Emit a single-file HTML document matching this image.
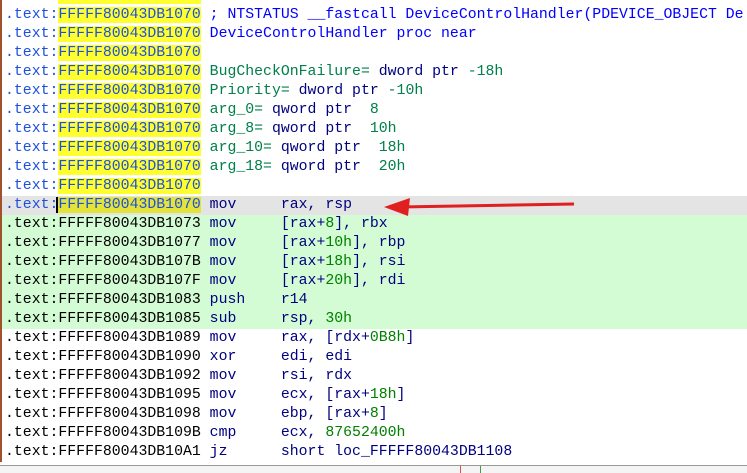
<!DOCTYPE html><html><head><style>
body{margin:0;width:747px;height:472px;overflow:hidden;background:#fff;position:relative}
#c{position:absolute;left:0;top:-13px;width:747px;border-left:2px solid #a0522d;font:14.83px/19px "Liberation Mono",monospace}
.l{height:19px;padding-left:3px;white-space:pre;overflow:hidden}
.p{color:#1e50e0}.b{color:#000}
.y{background:#ffff30}.yd{background:#e3e33a}
.g{background:#d4fcd4}.h{background:#e4e4e4}
.m{color:#000080}.n{color:#00804a}.k{color:#008000}.c{color:#0000ff}
#bot{position:absolute;left:0;top:465px;width:747px;height:7px;background:#f4f4f4;border-top:1px solid #999}
</style></head><body>
<div id="c"><div class="l"><span class="p">.text:</span><span class="p y">FFFFF80043DB1070</span></div><div class="l"><span class="p">.text:</span><span class="p y">FFFFF80043DB1070</span> <span class="c">; NTSTATUS __fastcall DeviceControlHandler(PDEVICE_OBJECT De</span></div><div class="l"><span class="p">.text:</span><span class="p y">FFFFF80043DB1070</span> <span class="c">DeviceControlHandler proc near</span></div><div class="l"><span class="p">.text:</span><span class="p y">FFFFF80043DB1070</span></div><div class="l"><span class="p">.text:</span><span class="p y">FFFFF80043DB1070</span> <span class="n">BugCheckOnFailure=</span><span class="m"> dword ptr </span><span class="n">-18h</span></div><div class="l"><span class="p">.text:</span><span class="p y">FFFFF80043DB1070</span> <span class="n">Priority=</span><span class="m"> dword ptr </span><span class="n">-10h</span></div><div class="l"><span class="p">.text:</span><span class="p y">FFFFF80043DB1070</span> <span class="n">arg_0=</span><span class="m"> qword ptr  </span><span class="n">8</span></div><div class="l"><span class="p">.text:</span><span class="p y">FFFFF80043DB1070</span> <span class="n">arg_8=</span><span class="m"> qword ptr  </span><span class="n">10h</span></div><div class="l"><span class="p">.text:</span><span class="p y">FFFFF80043DB1070</span> <span class="n">arg_10=</span><span class="m"> qword ptr  </span><span class="n">18h</span></div><div class="l"><span class="p">.text:</span><span class="p y">FFFFF80043DB1070</span> <span class="n">arg_18=</span><span class="m"> qword ptr  </span><span class="n">20h</span></div><div class="l"><span class="p">.text:</span><span class="p y">FFFFF80043DB1070</span></div><div class="l h"><span class="p">.text:</span><span class="p yd" style="border-left:2px solid #000;margin-left:-2px">FFFFF80043DB1070</span> <span class="m">mov     rax, rsp</span></div><div class="l g"><span class="b">.text:FFFFF80043DB1073</span> <span class="m">mov     [rax+<span class="k">8</span>], rbx</span></div><div class="l g"><span class="b">.text:FFFFF80043DB1077</span> <span class="m">mov     [rax+<span class="k">10h</span>], rbp</span></div><div class="l g"><span class="b">.text:FFFFF80043DB107B</span> <span class="m">mov     [rax+<span class="k">18h</span>], rsi</span></div><div class="l g"><span class="b">.text:FFFFF80043DB107F</span> <span class="m">mov     [rax+<span class="k">20h</span>], rdi</span></div><div class="l g"><span class="b">.text:FFFFF80043DB1083</span> <span class="m">push    r14</span></div><div class="l g"><span class="b">.text:FFFFF80043DB1085</span> <span class="m">sub     rsp, <span class="k">30h</span></span></div><div class="l"><span class="b">.text:FFFFF80043DB1089</span> <span class="m">mov     rax, [rdx+<span class="k">0B8h</span>]</span></div><div class="l"><span class="b">.text:FFFFF80043DB1090</span> <span class="m">xor     edi, edi</span></div><div class="l"><span class="b">.text:FFFFF80043DB1092</span> <span class="m">mov     rsi, rdx</span></div><div class="l"><span class="b">.text:FFFFF80043DB1095</span> <span class="m">mov     ecx, [rax+<span class="k">18h</span>]</span></div><div class="l"><span class="b">.text:FFFFF80043DB1098</span> <span class="m">mov     ebp, [rax+<span class="k">8</span>]</span></div><div class="l"><span class="b">.text:FFFFF80043DB109B</span> <span class="m">cmp     ecx, <span class="k">87652400h</span></span></div><div class="l"><span class="b">.text:FFFFF80043DB10A1</span> <span class="m">jz      short loc_FFFFF80043DB1108</span></div></div>
<svg style="position:absolute;left:0;top:0" width="747" height="472">
<line x1="574" y1="204" x2="400" y2="207" stroke="#e02020" stroke-width="3"/>
<polygon points="384,207 410,198 408,216" fill="#e02020"/>
</svg>
<div id="bot"><div style="position:absolute;left:460px;top:0;width:1px;height:7px;background:#e05050"></div><div style="position:absolute;left:480px;top:0;width:1px;height:7px;background:#40a040"></div></div>
</body></html>
